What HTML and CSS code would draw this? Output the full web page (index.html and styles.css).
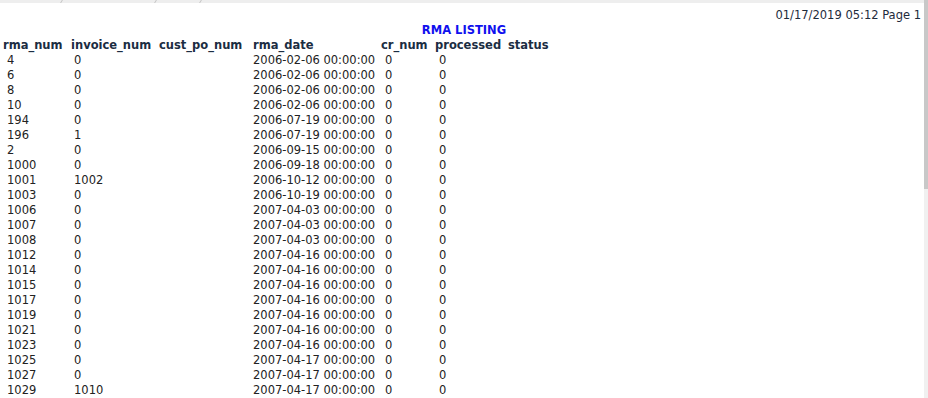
FILE: index.html
```html
<!DOCTYPE html>
<html lang="en">

<head>
    <meta charset="UTF-8">
    <meta name="viewport" content="width=device-width, initial-scale=1.0">
    <title>RMA Listing</title>
    <link rel="stylesheet" href="styles.css">
</head>

<body>
    <div class="tab-strip">
        <span class="tab-mark mark-1"></span>
        <span class="tab-mark mark-2"></span>
        <span class="tab-mark mark-3"></span>
    </div>

    <div class="report">
        <div class="stamp">01/17/2019 05:12 Page 1</div>
        <div class="report-title">RMA LISTING</div>

        <table class="listing">
            <colgroup>
                <col class="c-rma">
                <col class="c-inv">
                <col class="c-po">
                <col class="c-date">
                <col class="c-cr">
                <col class="c-proc">
                <col class="c-status">
            </colgroup>
            <thead>
                <tr>
                    <th>rma_num</th>
                    <th>invoice_num</th>
                    <th>cust_po_num</th>
                    <th>rma_date</th>
                    <th>cr_num</th>
                    <th>processed</th>
                    <th>status</th>
                </tr>
            </thead>
            <tbody>
                <tr><td>4</td><td>0</td><td></td><td class="date">2006-02-06 00:00:00</td><td>0</td><td>0</td><td></td></tr>
                <tr><td>6</td><td>0</td><td></td><td class="date">2006-02-06 00:00:00</td><td>0</td><td>0</td><td></td></tr>
                <tr><td>8</td><td>0</td><td></td><td class="date">2006-02-06 00:00:00</td><td>0</td><td>0</td><td></td></tr>
                <tr><td>10</td><td>0</td><td></td><td class="date">2006-02-06 00:00:00</td><td>0</td><td>0</td><td></td></tr>
                <tr><td>194</td><td>0</td><td></td><td class="date">2006-07-19 00:00:00</td><td>0</td><td>0</td><td></td></tr>
                <tr><td>196</td><td>1</td><td></td><td class="date">2006-07-19 00:00:00</td><td>0</td><td>0</td><td></td></tr>
                <tr><td>2</td><td>0</td><td></td><td class="date">2006-09-15 00:00:00</td><td>0</td><td>0</td><td></td></tr>
                <tr><td>1000</td><td>0</td><td></td><td class="date">2006-09-18 00:00:00</td><td>0</td><td>0</td><td></td></tr>
                <tr><td>1001</td><td>1002</td><td></td><td class="date">2006-10-12 00:00:00</td><td>0</td><td>0</td><td></td></tr>
                <tr><td>1003</td><td>0</td><td></td><td class="date">2006-10-19 00:00:00</td><td>0</td><td>0</td><td></td></tr>
                <tr><td>1006</td><td>0</td><td></td><td class="date">2007-04-03 00:00:00</td><td>0</td><td>0</td><td></td></tr>
                <tr><td>1007</td><td>0</td><td></td><td class="date">2007-04-03 00:00:00</td><td>0</td><td>0</td><td></td></tr>
                <tr><td>1008</td><td>0</td><td></td><td class="date">2007-04-03 00:00:00</td><td>0</td><td>0</td><td></td></tr>
                <tr><td>1012</td><td>0</td><td></td><td class="date">2007-04-16 00:00:00</td><td>0</td><td>0</td><td></td></tr>
                <tr><td>1014</td><td>0</td><td></td><td class="date">2007-04-16 00:00:00</td><td>0</td><td>0</td><td></td></tr>
                <tr><td>1015</td><td>0</td><td></td><td class="date">2007-04-16 00:00:00</td><td>0</td><td>0</td><td></td></tr>
                <tr><td>1017</td><td>0</td><td></td><td class="date">2007-04-16 00:00:00</td><td>0</td><td>0</td><td></td></tr>
                <tr><td>1019</td><td>0</td><td></td><td class="date">2007-04-16 00:00:00</td><td>0</td><td>0</td><td></td></tr>
                <tr><td>1021</td><td>0</td><td></td><td class="date">2007-04-16 00:00:00</td><td>0</td><td>0</td><td></td></tr>
                <tr><td>1023</td><td>0</td><td></td><td class="date">2007-04-16 00:00:00</td><td>0</td><td>0</td><td></td></tr>
                <tr><td>1025</td><td>0</td><td></td><td class="date">2007-04-17 00:00:00</td><td>0</td><td>0</td><td></td></tr>
                <tr><td>1027</td><td>0</td><td></td><td class="date">2007-04-17 00:00:00</td><td>0</td><td>0</td><td></td></tr>
                <tr><td>1029</td><td>1010</td><td></td><td class="date">2007-04-17 00:00:00</td><td>0</td><td>0</td><td></td></tr>
            </tbody>
        </table>
    </div>

    <!-- fake window scrollbar on the right edge -->
    <div class="scrollbar">
        <div class="scroll-thumb"></div>
    </div>
</body>

</html>
```

FILE: styles.css
```css
body {
    margin: 0;
    padding: 0;
    height: 100vh;
    overflow: hidden;
    background: #fff;
    font-family: Verdana, 'DejaVu Sans', sans-serif;
    font-size: 11.5px;
    line-height: 15px;
    color: #222;
}

.tab-strip {
    position: relative;
    height: 3px;
    background: #eeeeee;
}

.tab-mark {
    position: absolute;
    top: 0;
    width: 1px;
    height: 3px;
    background: #c4c4c4;
    transform: skewX(-30deg);
}

.mark-1 { left: 61px; }
.mark-2 { left: 155px; }
.mark-3 { left: 200px; }

.report {
    padding: 5px 0 0 0;
}

.stamp {
    text-align: right;
    padding-right: 7px;
    color: #1e2b3c;
}

.report-title {
    text-align: center;
    font-weight: bold;
    color: #1010ee;
}

.listing {
    border-collapse: collapse;
    table-layout: fixed;
    width: 600px;
}

.c-rma { width: 68px; }
.c-inv { width: 88px; }
.c-po { width: 94px; }
.c-date { width: 128px; }
.c-cr { width: 54px; }
.c-proc { width: 73px; }
.c-status { width: 95px; }

.listing th,
.listing td {
    padding: 0 0 0 3px;
    height: 15px;
    text-align: left;
    white-space: nowrap;
    vertical-align: middle;
}

.listing th {
    font-weight: bold;
    color: #1b2d42;
}

.listing td {
    padding-left: 7px;
}

.listing td:nth-child(2) {
    padding-left: 6px;
}

.listing td.date {
    padding-left: 3px;
}

.scrollbar {
    position: fixed;
    top: 0;
    right: 0;
    width: 4px;
    height: 100%;
    background: #f0f0f0;
}

.scroll-thumb {
    height: 189px;
    background: #c8c8c8;
}
```
